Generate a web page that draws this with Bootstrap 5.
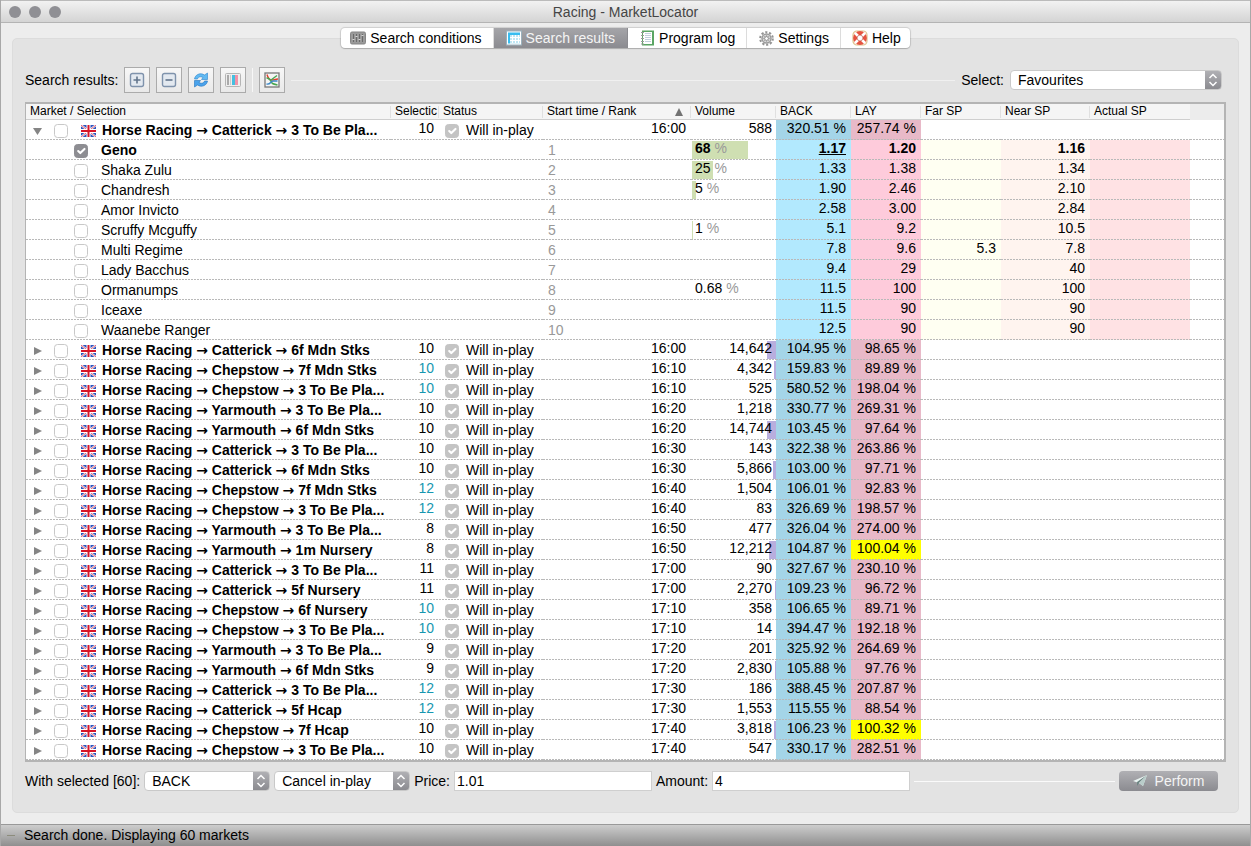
<!DOCTYPE html>
<html lang="en">
<head>
<meta charset="utf-8">
<meta name="viewport" content="width=device-width, initial-scale=1">
<title>Racing - MarketLocator</title>
<link href="https://cdn.jsdelivr.net/npm/bootstrap@5.3.0/dist/css/bootstrap.min.css" rel="stylesheet">
<style>
  body { font-family: "Liberation Sans", Arial, sans-serif; font-size: 14px; line-height: 20px; color: #000; background: #ededed; border: solid #a8a8a8; border-width: 0 1px; }
  .titlebar { height: 23px; background: linear-gradient(#f2f2f2, #d4d4d4); border-top: 1px solid #bbb; border-bottom: 1px solid #b4b4b4; color: #454545; }
  .titlebar h1 { font-size: 14px; line-height: 22px; font-weight: 400; }
  .lights { gap: 8px; left: 8px; top: 5px; }
  .lights i { width: 12px; height: 12px; border-radius: 50%; background: #8f8f94; }
  .tabs { margin: 5px 0 -10px; z-index: 1; }
  .tabs .nav { background: #fff; border-radius: 4px; box-shadow: 0 0 1px 1px #0002, 0 1px 1px #0002; overflow: hidden; }
  .tabs .nav-link { height: 20px; padding: 0 11px 0 9px; gap: 4px; color: #000; border-right: 1px solid #dcdcdc; }
  .tabs .nav-link.active { background: linear-gradient(#a5a5a9, #8b8b90); color: #f4f4f4; padding: 0 12px; border-color: #8b8b90; }
  .tabs .nav-link.wide { padding: 0 11px 0 12px; }
  .tabs li:last-child .nav-link.wide { border: 0; padding: 0 9px 0 11px; }
  .pane { margin: 0 11px 11px; padding: 28px 12px 20px; background: #e3e3e3; border: 1px solid #dcdcdc; border-radius: 5px; }
  .tools { gap: 6px; height: 26px; margin-bottom: 9px; }
  .tool { width: 26px; height: 26px; background: linear-gradient(#f7f7f7, #e9e9e9); border: 1px solid #ababab; }
  .split { width: 1px; height: 24px; background: #f7f7f7; }
  .rule { height: 1px; background: #f0f0f0; }
  .rule.bright { background: #fafafa; }
  .pick { appearance: none; height: 20px; padding: 0 24px 0 7px; border: 1px solid #c9c9c9; border-radius: 4px; color: #000; line-height: 18px;
    background: url("data:image/svg+xml,%3Csvg xmlns='http://www.w3.org/2000/svg' width='16' height='18' fill='none' stroke='white' stroke-width='1.5'%3E%3Cpath d='M4.500 7 8 3.500 11.500 7M4.500 11 8 14.500 11.500 11'/%3E%3C/svg%3E") right / 16px 18px no-repeat, linear-gradient(#b0b0b4, #8b8b90) right / 16px 100% no-repeat, #fff; }
  .w-fav { width: 212px; } .w-side { width: 126px; } .w-act { width: 136px; }
  .entry { width: 198px; height: 20px; padding: 0 2px; border: 1px solid #cfcfcf; background: #fff; }
  .grid-box { border: solid #b4b4b4; border-width: 2px 2px 2px 1px; background: #fff; }
  .markets { width: 100%; table-layout: fixed; border-collapse: separate; border-spacing: 0; }
  .markets th { height: 16px; padding: 0 0 0 4px; font-size: 12px; line-height: 15px; font-weight: 400; background: linear-gradient(#e0e0e0, #e0e0e0) right / 1px 12px no-repeat #f5f5f5; border-bottom: 1px solid #cfcfcf; white-space: nowrap; overflow: hidden; }
  .markets th:last-child { background: #ececec; border-color: #ececec; }
  .markets th.plain { background: #f5f5f5; }
  .markets td { height: 20px; padding: 0 5px 4px; line-height: 16px; text-align: right; white-space: nowrap; position: relative; background: repeating-linear-gradient(90deg, #b9b9b9 0 2px, transparent 2px 3px) bottom / 100% 1px no-repeat var(--cell, transparent); }
  .markets td.text { text-align: left; padding: 1px 6px 0; line-height: 19px; }
  .markets td.rank { text-align: left; color: #999; padding: 1px 5px 0; line-height: 19px; }
  .markets td.vol { padding-right: 4px; }
  .markets td.share { text-align: left; padding-left: 4px; }
  .back { --cell: #a4d5e8; } .lay { --cell: #e8b9c8; } .hot { --cell: #ff0; }
  .runner .back { --cell: #b2e9fe; } .runner .lay { --cell: #fecbdb; }
  .runner .far { --cell: #fffff2; } .runner .near { --cell: #fff4ef; } .runner .actual { --cell: #ffe2e4; }
  .best { font-weight: 700; }
  .bar { position: absolute; top: 1px; height: 18px; left: 1px; background: #cfdfb2; }
  .bar.money { left: auto; right: 0; background: #b8aede; }
  .vol span { position: relative; }
  .unit { color: #999; font-weight: 400; }
  .more { color: #1697b0; }
  .tick { width: 14px; height: 14px; margin: 0; border: 1px solid #c8c8c8; border-radius: 3px; flex: none; background-color: #fff; }
  .markets .tick { margin: 0; float: none; }
  .tick:checked { border-color: #8d8d92; background-color: #8d8d92; background-size: 14px; }
  .tick:disabled { opacity: 1; border-color: #c4c4c4; background-color: #c4c4c4; }
  .tick:disabled ~ span { opacity: 1; }
  .twist { width: 10px; height: 19px; padding: 0; border: 0; background: none; }
  .market-name { gap: 13px; }
  .market-name svg { margin-right: -7px; }
  .to { font-family: "DejaVu Sans", sans-serif; }
  .runner .text label { padding-left: 42px; gap: 13px; }
  .status label { gap: 7px; }
  .foot { margin-top: 8px; gap: 4px; height: 22px; }
  .perform { height: 20px; width: 99px; padding: 0; border: 0; border-radius: 4px; font-size: 14px; line-height: 20px; color: #f4f4f4; background: linear-gradient(#b0b0b4, #8b8b90); }
  .statusbar { height: 22px; border-top: 1px solid #999; background: linear-gradient(#cdcdcd, #8f8f8f); padding-left: 6px; gap: 9px; line-height: 21px; }
  .statusbar i { width: 8px; height: 1px; background: #8c8c7c; }
  svg { display: block; flex: none; }
</style>
</head>
<body class="min-vh-100 d-flex flex-column">
<svg width="0" height="0" class="position-absolute" aria-hidden="true">
  <symbol id="flag" viewBox="0 0 15 12">
    <path fill="#2f55bd" d="M0 0h15v12H0z"/>
    <path stroke="#fff" stroke-width="2" d="M0 0l15 12M15 0L0 12"/>
    <path stroke="#e2344a" stroke-width=".8" d="M0 0l15 12M15 0L0 12"/>
    <path stroke="#fff" stroke-width="4" d="M7.500 0v12M0 6h15"/>
    <path stroke="#d81428" stroke-width="2" d="M7.500 0v12M0 6h15"/>
  </symbol>
</svg>

<header class="titlebar position-relative text-center">
  <div class="lights d-flex position-absolute"><i></i><i></i><i></i></div>
  <h1 class="m-0">Racing - MarketLocator</h1>
</header>

<nav class="tabs d-flex justify-content-center position-relative">
  <ul class="nav flex-nowrap">
    <li><a class="nav-link d-flex align-items-center" href="#">
      <svg width="16" height="14" viewBox="0 0 16 14"><rect x=".5" y="1" width="15" height="12" rx="1.500" fill="#9a9a9a" stroke="#858585"/><path stroke="#6a6a6a" d="M3.500 3v8M6.500 3v8M9.500 3v8M12.500 3v8"/><path stroke="#d6d6d6" stroke-width="1.200" d="M2.500 8.500h2M5.500 5.500h2M8.500 8.500h2M11.500 4.500h2"/></svg>
      Search conditions</a></li>
    <li><a class="nav-link active d-flex align-items-center" href="#">
      <svg width="16" height="16" viewBox="0 0 16 16"><rect x=".5" y="1" width="15" height="14" fill="#fff" stroke="#9bb1bd"/><path fill="#38bdf0" d="M2 2.500h12v2.500H2zM2 5h2v8.500H2z"/><path fill="#bfe6f3" d="M4 5h10v8.500H4z"/><path stroke="#fff" d="M4 7.500h10M4 10.500h10M6.500 5v8M9.500 5v8M12.500 5v8"/></svg>
      Search results</a></li>
    <li><a class="nav-link wide d-flex align-items-center" href="#">
      <svg width="15" height="16" viewBox="0 0 15 16"><path fill="#5aa563" d="M2 .5h12v15H2z"/><path fill="#fff" d="M3 2h9v12H3z"/><path stroke="#c3d0de" d="M5 3.500h6M5 5.500h6M5 7.500h6M5 9.500h6M5 11.500h6"/><path stroke="#9b9b9b" d="M1 2.500h3M1 5.500h3M1 8.500h3M1 11.500h3M1 14h3"/></svg>
      Program log</a></li>
    <li><a class="nav-link wide d-flex align-items-center" href="#">
      <svg width="15" height="15" viewBox="0 0 16 16"><circle cx="8" cy="8" r="6.700" fill="none" stroke="#939393" stroke-width="2.200" stroke-dasharray="2.300 1.900"/><circle cx="8" cy="8" r="4.800" fill="#d6d6d6" stroke="#9a9a9a" stroke-width="1.500"/><path stroke="#aaa" d="M8 3v10M3 8h10M4.500 4.500l7 7M11.500 4.500l-7 7"/><circle cx="8" cy="8" r="2" fill="#fff" stroke="#8a8a8a"/></svg>
      Settings</a></li>
    <li><a class="nav-link wide d-flex align-items-center" href="#">
      <svg width="16" height="16" viewBox="0 0 16 16"><rect x="1" y="1" width="14" height="14" rx="4" fill="none" stroke="#dfc189" stroke-width="1.200"/><circle cx="8" cy="8" r="4.900" fill="none" stroke="#e5533f" stroke-width="4"/><path stroke="#fff" stroke-width="2.600" d="M3 3l3 3M13 3l-3 3M3 13l3-3M13 13l-3-3"/><circle cx="8" cy="8" r="2.900" fill="#fff" stroke="#b84a3c" stroke-width=".6"/></svg>
      Help</a></li>
  </ul>
</nav>

<main class="pane flex-grow-1">
  <div class="tools d-flex align-items-center">
    <span>Search results:</span>
    <button class="tool btn p-0 rounded-0 d-flex align-items-center justify-content-center" aria-label="Expand all"><svg width="16" height="16" fill="none"><rect x="1.500" y="1.500" width="13" height="13" rx="2" fill="#e3e9f0" stroke="#7f93ac" stroke-width="1.400"/><path stroke="#62758c" stroke-width="1.600" d="M4.500 8h7M8 4.500v7"/></svg></button>
    <button class="tool btn p-0 rounded-0 d-flex align-items-center justify-content-center" aria-label="Collapse all"><svg width="16" height="16" fill="none"><rect x="1.500" y="1.500" width="13" height="13" rx="2" fill="#e3e9f0" stroke="#7f93ac" stroke-width="1.400"/><path stroke="#62758c" stroke-width="1.600" d="M4.500 8h7"/></svg></button>
    <button class="tool btn p-0 rounded-0 d-flex align-items-center justify-content-center" aria-label="Refresh"><svg width="16" height="16"><path fill="#62baf2" stroke="#2b83cf" stroke-width=".6" d="M1.500 7C2 3 7 0 11.500 3L14.500 1V7.500H8.500L10 5.500C7.500 4 5 5 4.500 7z"/><path fill="#4aa3ec" stroke="#2373bd" stroke-width=".6" d="M14.500 9C14 13 9 16 4.500 13L1.500 15V8.500H7.500L6 10.500C8.500 12 11 11 11.500 9z"/></svg></button>
    <button class="tool btn p-0 rounded-0 d-flex align-items-center justify-content-center" aria-label="Columns"><svg width="16" height="16"><rect x=".5" y="1.500" width="15" height="13" rx="1" fill="#eee" stroke="#b5b5b5"/><path fill="#aaa" d="M2 3h2v10H2z"/><path fill="#ccc" d="M5 3h1v10H5z"/><path fill="#45bfe0" d="M7 3h3v10H7z"/><path fill="#f193a8" d="M10 3h3v10h-3z"/></svg></button>
    <span class="split"></span>
    <button class="tool btn p-0 rounded-0 d-flex align-items-center justify-content-center" aria-label="Charts"><svg width="16" height="16" fill="none"><rect x="1" y="1" width="14" height="14" fill="#f5f5f5" stroke="#777" stroke-width="1.300"/><path stroke="#e0412e" stroke-width="1.400" d="M3 2.500c1 4 3 5.500 5 5.500s3-1 6-1"/><path stroke="#49a651" stroke-width="1.400" d="M2.500 6c4 0 5 5 6 5.500s3 1 5 1.500M7 8l6-4.500"/><path stroke="#3a87c7" stroke-width="1.400" d="M2.500 12c4 1 4-3 6.500-3h4.500"/></svg></button>
    <span class="rule flex-grow-1"></span>
    <label for="preset">Select:</label>
    <select id="preset" class="pick w-fav me-1"><option>Favourites</option></select>
  </div>

  <div class="grid-box">
    <table class="markets">
      <colgroup><col style="width:365px"><col style="width:48px"><col style="width:104px"><col style="width:148px"><col style="width:85px"><col style="width:75px"><col style="width:70px"><col style="width:80px"><col style="width:89px"><col style="width:100px"><col></colgroup>
      <thead><tr><th>Market / Selection</th><th>Selectic</th><th>Status</th>
        <th><span class="d-flex justify-content-between align-items-center">Start time / Rank<svg class="me-2" width="8" height="8"><path fill="#737373" d="M4 0l4 8H0z"/></svg></span></th>
        <th>Volume</th><th>BACK</th><th>LAY</th><th>Far SP</th><th>Near SP</th><th class="plain">Actual SP</th><th></th></tr></thead>
      <tbody id="rows"></tbody>
    </table>
  </div>

  <div class="foot d-flex align-items-center">
    <label for="side">With selected [60]:</label>
    <select id="side" class="pick w-side"><option>BACK</option></select>
    <select id="action" class="pick w-act"><option>Cancel in-play</option></select>
    <label for="price">Price:</label>
    <input id="price" class="entry" type="text" value="1.01">
    <label for="amount">Amount:</label>
    <input id="amount" class="entry" type="text" value="4">
    <span class="rule bright flex-grow-1"></span>
    <button class="perform btn d-flex align-items-center justify-content-center gap-2 me-2"><svg width="14" height="12"><path fill="#e9f3f1" d="M0 6L14 0 10 11 6 8z"/><path fill="#6d8683" d="M14 0L4 7v4l2-3z"/><path fill="#b9cdca" d="M14 0L6 8l4 3z"/></svg>Perform</button>
  </div>
</main>

<footer class="statusbar d-flex align-items-center"><i></i><span>Search done. Displaying 60 markets</span></footer>

<script src="https://cdn.jsdelivr.net/npm/bootstrap@5.3.0/dist/js/bootstrap.bundle.min.js"></script>
<script>
  // venue, race, selections (negative: highlighted), start, volume, back book, lay book
  const P = '3 To Be Pla...';
  const markets = [
    ['Catterick', P, 10, '16:00', 588, '320.51', '257.74'],
    ['Catterick', '6f Mdn Stks', 10, '16:00', 14642, '104.95', '98.65'],
    ['Chepstow', '7f Mdn Stks', -10, '16:10', 4342, '159.83', '89.89'],
    ['Chepstow', P, -10, '16:10', 525, '580.52', '198.04'],
    ['Yarmouth', P, 10, '16:20', 1218, '330.77', '269.31'],
    ['Yarmouth', '6f Mdn Stks', 10, '16:20', 14744, '103.45', '97.64'],
    ['Catterick', P, 10, '16:30', 143, '322.38', '263.86'],
    ['Catterick', '6f Mdn Stks', 10, '16:30', 5866, '103.00', '97.71'],
    ['Chepstow', '7f Mdn Stks', -12, '16:40', 1504, '106.01', '92.83'],
    ['Chepstow', P, -12, '16:40', 83, '326.69', '198.57'],
    ['Yarmouth', P, 8, '16:50', 477, '326.04', '274.00'],
    ['Yarmouth', '1m Nursery', 8, '16:50', 12212, '104.87', '100.04'],
    ['Catterick', P, 11, '17:00', 90, '327.67', '230.10'],
    ['Catterick', '5f Nursery', 11, '17:00', 2270, '109.23', '96.72'],
    ['Chepstow', '6f Nursery', -10, '17:10', 358, '106.65', '89.71'],
    ['Chepstow', P, -10, '17:10', 14, '394.47', '192.18'],
    ['Yarmouth', P, 9, '17:20', 201, '325.92', '264.69'],
    ['Yarmouth', '6f Mdn Stks', 9, '17:20', 2830, '105.88', '97.76'],
    ['Catterick', P, -12, '17:30', 186, '388.45', '207.87'],
    ['Catterick', '5f Hcap', -12, '17:30', 1553, '115.55', '88.54'],
    ['Chepstow', '7f Hcap', 10, '17:40', 3818, '106.23', '100.32'],
    ['Chepstow', P, 10, '17:40', 547, '330.17', '282.51']
  ];
  // name, share of volume, back, lay, far SP, near SP
  const runners = [
    ['Geno', '68', '1.17', '1.20', '', '1.16'], ['Shaka Zulu', '25', '1.33', '1.38', '', '1.34'],
    ['Chandresh', '5', '1.90', '2.46', '', '2.10'], ['Amor Invicto', '', '2.58', '3.00', '', '2.84'],
    ['Scruffy Mcguffy', '1', '5.1', '9.2', '', '10.5'], ['Multi Regime', '', '7.8', '9.6', '5.3', '7.8'],
    ['Lady Bacchus', '', '9.4', '29', '', '40'], ['Ormanumps', '0.68', '11.5', '100', '', '100'],
    ['Iceaxe', '', '11.5', '90', '', '90'], ['Waanebe Ranger', '', '12.5', '90', '', '90']
  ];
  const to = ' <span class="to">→</span> ';
  const marketRow = ([venue, race, n, time, vol, back, lay], i) => {
    const money = Math.floor(vol / 1600), hot = lay >= 100 && lay < 101;
    return `<tr><td class="text"><div class="d-flex align-items-center">
      <button class="twist" aria-label="Toggle market"><svg width="10" height="19"><path fill="#858585" d="${i ? 'M2 6l8 4-8 4z' : 'M1 7h9L5.500 14z'}"/></svg></button>
      <label class="market-name d-flex align-items-center fw-bold ms-2 ps-1"><input type="checkbox" class="form-check-input tick">
      <svg width="15" height="12"><use href="#flag" width="15" height="12"/></svg><span>Horse Racing${to}${venue}${to}${race}</span></label></div></td>
      <td class="${n < 0 ? 'more' : ''}">${Math.abs(n)}</td>
      <td class="text status"><label class="d-flex align-items-center"><input type="checkbox" class="form-check-input tick" checked disabled><span>Will in-play</span></label></td>
      <td>${time}</td><td class="vol">${money ? `<i class="bar money" style="width:${money}px"></i>` : ''}<span>${vol.toLocaleString('en-US')}</span></td>
      <td class="back">${back} %</td><td class="lay ${hot ? 'hot' : ''}">${lay} %</td><td></td><td></td><td></td><td></td></tr>`;
  };
  const runnerRow = ([name, share, back, lay, far, near], i) => `<tr class="runner ${i ? '' : 'best'}">
      <td class="text"><label class="d-flex align-items-center"><input type="checkbox" class="form-check-input tick" ${i ? '' : 'checked'}>${name}</label></td>
      <td></td><td></td><td class="rank fw-normal">${i + 1}</td>
      <td class="vol share">${share >= 1 ? `<i class="bar" style="width:${Math.round(share * 0.83)}px"></i>` : ''}${share ? `<span>${share} <span class="unit">%</span></span>` : ''}</td>
      <td class="back ${i ? '' : 'text-decoration-underline'}">${back}</td><td class="lay">${lay}</td><td class="far">${far}</td><td class="near">${near}</td><td class="actual"></td><td></td></tr>`;
  const rows = markets.map(marketRow);
  rows.splice(1, 0, ...runners.map(runnerRow));
  document.getElementById('rows').innerHTML = rows.join('');
</script>
</body>
</html>
